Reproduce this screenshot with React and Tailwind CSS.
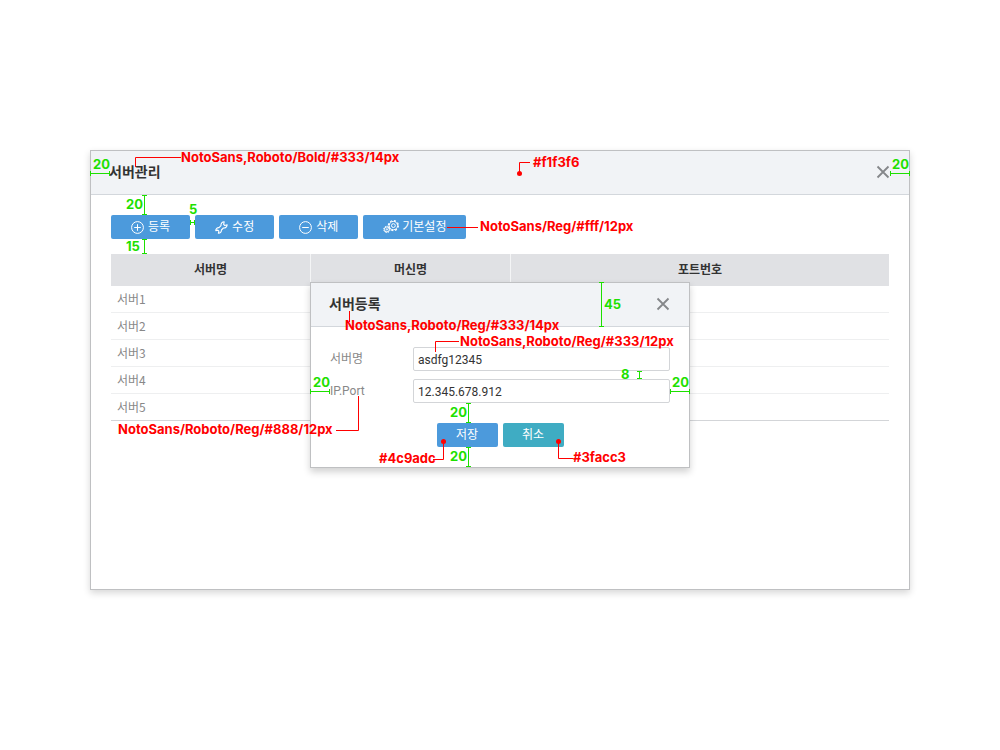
import React from "react";

const servers = ["서버1", "서버2", "서버3", "서버4", "서버5"];

function PlusIcon() {
  return (
    <svg width="13" height="13" viewBox="0 0 13 13" fill="none" stroke="currentColor" aria-hidden="true">
      <circle cx="6.5" cy="6.5" r="5.9" />
      <path d="M6.5 3.2v6.6M3.2 6.5h6.6" />
    </svg>
  );
}

function MinusIcon() {
  return (
    <svg width="13" height="13" viewBox="0 0 13 13" fill="none" stroke="currentColor" aria-hidden="true">
      <circle cx="6.5" cy="6.5" r="5.9" />
      <path d="M3.2 6.5h6.6" />
    </svg>
  );
}

function WrenchIcon() {
  return (
    <svg width="13" height="13" viewBox="0 0 13 13" fill="none" stroke="currentColor" strokeWidth="1.1" strokeLinejoin="round" aria-hidden="true">
      <path d="M9.2 .8L8.6 3.4L9.8 4.5L12.2 3.8A3.3 3.3 0 0 1 8.4 7L6.4 9A2.9 2.9 0 0 1 3.4 12.2L3.9 10.2L2.8 9.1L.8 9.6A2.9 2.9 0 0 1 4 6.6L6 4.6A3.3 3.3 0 0 1 9.2 .8Z" />
    </svg>
  );
}

function GearsIcon() {
  return (
    <svg width="15" height="14" viewBox="0 0 15 14" fill="none" stroke="currentColor" className="overflow-visible" aria-hidden="true">
      <circle cx="10.4" cy="5.6" r="4.2" />
      <circle cx="10.4" cy="5.6" r="5" strokeWidth="1.2" strokeDasharray="2 1.927" />
      <circle cx="10.4" cy="5.6" r="1.9" />
      <circle cx="3.9" cy="9.4" r="2.5" />
      <circle cx="3.9" cy="9.4" r="3.2" strokeDasharray="1.4 1.113" />
      <circle cx="3.9" cy="9.4" r="0.7" />
    </svg>
  );
}

function CloseButton({ label }) {
  return (
    <button type="button" aria-label={label} className="text-[#85878a]">
      <svg width="14" height="14" viewBox="0 0 14 14" fill="none" stroke="currentColor" strokeWidth="1.8" aria-hidden="true">
        <path d="M1.5 1.5l11 11M12.5 1.5l-11 11" />
      </svg>
    </button>
  );
}

function ToolButton({ icon, children }) {
  return (
    <button
      type="button"
      className="flex h-6 items-center gap-1 rounded-xs bg-[#4c9adc] px-5 text-xs text-white"
    >
      {icon}
      {children}
    </button>
  );
}

function Header({ title, closeLabel }) {
  return (
    <header className="flex h-11 items-center justify-between border-b border-[#d3d7dc] bg-[#f1f3f6] pr-[19px] pb-0.5 pl-[18px]">
      <h2 className="text-sm font-bold">{title}</h2>
      <CloseButton label={closeLabel} />
    </header>
  );
}

function Note({ className, children }) {
  return (
    <span className={"absolute font-[Inter,sans-serif] text-[13px] leading-[14px] font-bold whitespace-nowrap " + className}>
      {children}
    </span>
  );
}

/* Dimension line with end ticks */
function Span({ x, y, length, vertical }) {
  const end = length - 1;
  const d = vertical
    ? `M${x - 2} ${y}.5h5M${x - 2} ${y + end}.5h5M${x}.5 ${y}v${length}`
    : `M${x}.5 ${y - 2}v5M${x + end}.5 ${y - 2}v5M${x} ${y}.5h${length}`;
  return <path d={d} stroke="#1de000" fill="none" />;
}

function WindowNotes() {
  return (
    <div className="pointer-events-none absolute inset-0">
      <svg width="820" height="440" className="absolute top-0 left-0" aria-hidden="true">
        <Span x={0} y={23} length={20} />
        <Span x={800} y={23} length={20} />
        <Span x={54} y={45} length={20} vertical />
        <Span x={100} y={72} length={5} />
        <Span x={54} y={89} length={15} vertical />
        <g stroke="#f00" fill="none">
          <path d="M45.5 17V7.5H91" />
          <path d="M429.5 23V12.5H440" />
          <path d="M357 77.5H388" />
        </g>
        <circle cx="429.5" cy="23.5" r="2.5" fill="#f00" />
      </svg>
      <Note className="top-0 left-[91px] text-[#f00]">NotoSans,Roboto/Bold/#333/14px</Note>
      <Note className="top-[5px] left-[443px] text-[#f00]">#f1f3f6</Note>
      <Note className="top-[69px] left-[390px] text-[#f00]">NotoSans/Reg/#fff/12px</Note>
      <Note className="top-[7px] left-[3px] text-[#1de000]">20</Note>
      <Note className="top-[7px] right-[1px] text-[#1de000]">20</Note>
      <Note className="top-[47px] left-9 text-[#1de000]">20</Note>
      <Note className="top-[52px] left-[99px] text-[#1de000]">5</Note>
      <Note className="top-[89px] left-9 text-[#1de000]">15</Note>
    </div>
  );
}

function DialogNotes() {
  return (
    <div className="pointer-events-none absolute inset-0">
      <svg width="380" height="186" className="absolute top-0 left-0 overflow-visible" aria-hidden="true">
        <Span x={291} y={0} length={45} vertical />
        <Span x={329} y={89} length={8} vertical />
        <Span x={0} y={109} length={20} />
        <Span x={360} y={109} length={20} />
        <Span x={158} y={121} length={20} vertical />
        <Span x={158} y={165} length={20} vertical />
        <g stroke="#f00" fill="none">
          <path d="M39.5 29V40" />
          <path d="M125.5 70V59.5H149" />
          <path d="M48.5 114V148.5H26" />
          <path d="M133.5 159V177.5H123" />
          <path d="M248.5 159V176.5H263" />
        </g>
        <circle cx="133.5" cy="159.5" r="2.5" fill="#f00" />
        <circle cx="248.5" cy="159.5" r="2.5" fill="#f00" />
      </svg>
      <Note className="top-9 left-[35px] text-[#f00]">NotoSans,Roboto/Reg/#333/14px</Note>
      <Note className="top-[52px] left-[150px] text-[#f00]">NotoSans,Roboto/Reg/#333/12px</Note>
      <Note className="top-[140px] left-[-192px] text-[#f00]">NotoSans/Roboto/Reg/#888/12px</Note>
      <Note className="top-[169px] left-[69px] text-[#f00]">#4c9adc</Note>
      <Note className="top-[168px] left-[263px] text-[#f00]">#3facc3</Note>
      <Note className="top-[15px] left-[294px] text-[#1de000]">45</Note>
      <Note className="top-[85px] left-[311px] text-[#1de000]">8</Note>
      <Note className="top-[93px] left-[3px] text-[#1de000]">20</Note>
      <Note className="top-[93px] right-[1px] text-[#1de000]">20</Note>
      <Note className="top-[123px] left-[140px] text-[#1de000]">20</Note>
      <Note className="top-[167px] left-[140px] text-[#1de000]">20</Note>
    </div>
  );
}

function Field({ id, label, value }) {
  return (
    <div className="flex items-center">
      <label htmlFor={id} className="w-[83px] shrink-0 text-xs leading-4 text-[#888]">
        {label}
      </label>
      <input
        id={id}
        type="text"
        defaultValue={value}
        className="h-6 min-w-0 flex-1 rounded-xs border border-[#d3d5d8] bg-white px-1 pt-0.5 text-xs text-[#333]"
      />
    </div>
  );
}

function RegisterDialog() {
  return (
    <div className="absolute inset-0 flex items-start justify-center pt-[132px]">
      <div className="relative w-full max-w-[380px]">
        <section role="dialog" aria-label="서버등록" className="border border-[#bfc0c2] bg-white shadow-[0_4px_7px_rgba(0,0,0,0.18)]">
          <Header title="서버등록" closeLabel="서버등록 닫기" />
          <form className="flex flex-col gap-5 px-[19px] py-5" onSubmit={(e) => e.preventDefault()}>
            <div className="flex flex-col gap-2">
              <Field id="server-name" label="서버명" value="asdfg12345" />
              <Field id="ip-port" label="IP.Port" value="12.345.678.912" />
            </div>
            <div className="flex justify-center gap-[5px] text-xs text-white">
              <button type="submit" className="h-6 w-[61px] rounded-xs bg-[#4c9adc]">저장</button>
              <button type="button" className="h-6 w-[61px] rounded-xs bg-[#3facc3]">취소</button>
            </div>
          </form>
        </section>
        <DialogNotes />
      </div>
    </div>
  );
}

export default function App() {
  return (
    <main className="min-h-screen bg-white px-5 pt-[150px] pb-10 font-[Roboto,'Noto_Sans_CJK_KR',sans-serif] text-[#333]">
      <div className="relative mx-auto w-full max-w-[820px]">
        <section className="min-h-[440px] border border-[#bfc0c2] bg-white shadow-[0_3px_7px_rgba(0,0,0,0.16)]">
          <Header title="서버관리" closeLabel="서버관리 닫기" />
          <div className="flex flex-col gap-[15px] p-5">
            <div className="flex gap-[5px]">
              <ToolButton icon={<PlusIcon />}>등록</ToolButton>
              <ToolButton icon={<WrenchIcon />}>수정</ToolButton>
              <ToolButton icon={<MinusIcon />}>삭제</ToolButton>
              <ToolButton icon={<GearsIcon />}>기본설정</ToolButton>
            </div>
            <table className="w-full table-fixed border-separate border-spacing-0 text-xs">
              <thead>
                <tr className="h-8 bg-[#e0e1e4]">
                  <th className="w-[200px] border-r border-[#f4f5f6] font-bold">서버명</th>
                  <th className="w-[200px] border-r border-[#f4f5f6] font-bold">머신명</th>
                  <th className="font-bold">포트번호</th>
                </tr>
              </thead>
              <tbody className="font-['Noto_Sans_CJK_KR',sans-serif] text-[#888] [&>tr:last-child>td]:border-[#d3d5d8]">
                {servers.map((name) => (
                  <tr key={name} className="h-[27px]">
                    <td className="border-b border-[#eeeff0] px-1.5">{name}</td>
                    <td className="border-b border-[#eeeff0]" />
                    <td className="border-b border-[#eeeff0]" />
                  </tr>
                ))}
              </tbody>
            </table>
          </div>
        </section>
        <RegisterDialog />
        <WindowNotes />
      </div>
    </main>
  );
}
